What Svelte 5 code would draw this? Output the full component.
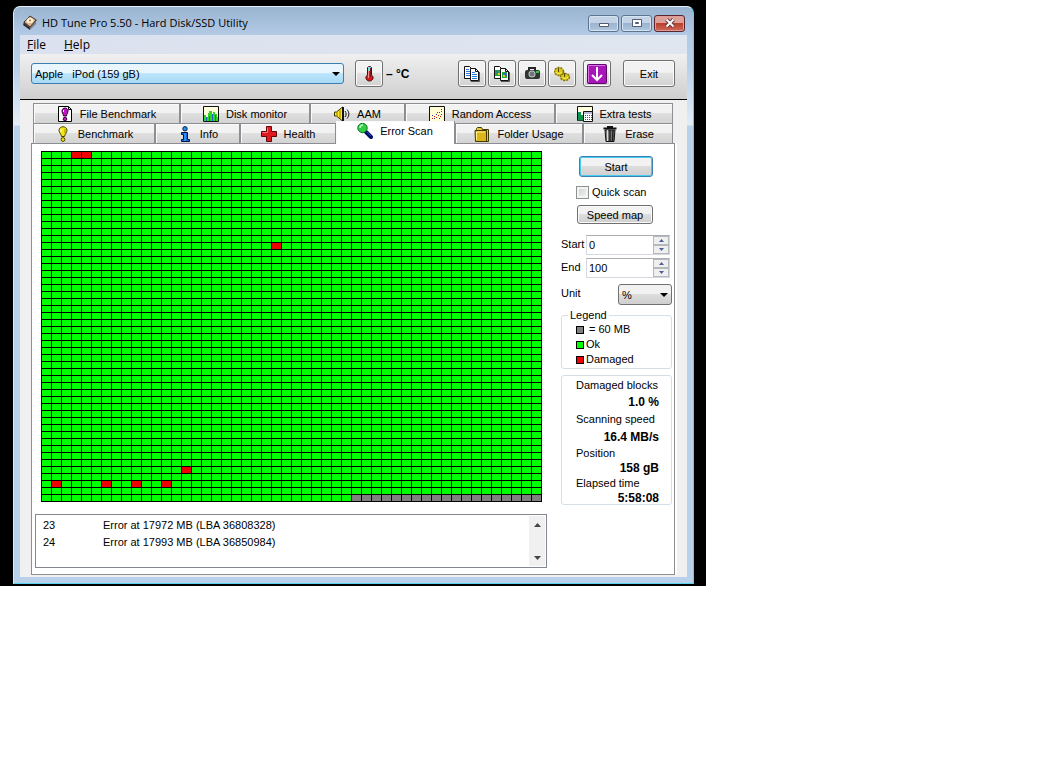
<!-- HD Tune Pro - Error Scan window -->
<script lang="ts">
    type Tab = {
        name: string;
        icon: string;
        active?: boolean;
    }

    const COLS = 50;
    const ROWS = 50;

    // Block indexes, counted row by row
    const damaged = new Set([3, 4, 673, 2264, 2351, 2356, 2359, 2362]);
    const scannedBlocks = 2481;

    const blocks = Array.from({length: COLS * ROWS}, (_, i) => {
        if (damaged.has(i)) return 'damaged';
        return i < scannedBlocks ? 'ok' : 'pending';
    });

    const backTabs: Tab[] = [
        {name: 'File Benchmark', icon: 'file'},
        {name: 'Disk monitor', icon: 'monitor'},
        {name: 'AAM', icon: 'speaker'},
        {name: 'Random Access', icon: 'random'},
        {name: 'Extra tests', icon: 'extra'},
    ];

    const frontTabs: Tab[] = [
        {name: 'Benchmark', icon: 'bulb'},
        {name: 'Info', icon: 'info'},
        {name: 'Health', icon: 'health'},
        {name: 'Error Scan', icon: 'scan', active: true},
        {name: 'Folder Usage', icon: 'folder'},
        {name: 'Erase', icon: 'trash'},
    ];

    const tools = [
        {icon: 'copyText', label: 'Copy text'},
        {icon: 'copyImage', label: 'Copy image'},
        {icon: 'camera', label: 'Save screenshot'},
        {icon: 'options', label: 'Options'},
        {icon: 'down', label: 'Minimize to tray'},
    ];

    const errors = [
        {id: 23, text: 'Error at 17972 MB (LBA 36808328)'},
        {id: 24, text: 'Error at 17993 MB (LBA 36850984)'},
    ];

    const stats = [
        {label: 'Damaged blocks', value: '1.0 %'},
        {label: 'Scanning speed', value: '16.4 MB/s'},
        {label: 'Position', value: '158 gB'},
        {label: 'Elapsed time', value: '5:58:08'},
    ];

    let quickScan = $state(false);
    let start = $state(0);
    let end = $state(100);
</script>

{#snippet icon(name: string)}
    <svg class="icon" width="16" height="16" viewBox="0 0 16 16" aria-hidden="true">
        {#if name === 'app'}
            <path d="M1 8 8 1l7 4-7 9z" fill="#6a4a38"/>
            <path d="M2 7 8 1l6 4-6 7z" fill="#d9b48c" stroke="#4b3a35"/>
            <ellipse cx="8" cy="5.5" rx="3.4" ry="2.6" fill="#fff0d4"/>
            <circle cx="8" cy="5.5" r="1" fill="#9d6c48"/>
            <path d="M2 8l6 5v2L1 10z" fill="#2c2c30"/>
            <path d="M8 13l6-7v3l-6 6z" fill="#81818b"/>
        {:else if name === 'file'}
            <path d="M1.500 .5h10l3 3v12h-13z" fill="#fff" stroke="#000"/>
            <path d="M11.500 .5v3h3" fill="none" stroke="#000"/>
            <path d="M5 5c0-4 6-4 6 0 0 2-1 2-1.500 5h-3C6 7 5 7 5 5z" fill="#c313c7" stroke="#300030"/>
            <circle cx="8" cy="13" r="1.800" fill="#c313c7" stroke="#300030"/>
            <path d="M6.500 4v2" stroke="#fff"/>
        {:else if name === 'monitor'}
            <path d="M.5 .5h15v15H.5z" fill="#ffffdb" stroke="#111"/>
            <path d="M1 15V9h2v2h2V7h1V5h3v3h1V6h2v2h2v3h1v4z" fill="#2cd428"/>
            <path d="M3 11h1v4H3zM6 10h1v5H6zM9 8h1v7H9zM12 9h1v6h-1z" fill="#2461cc"/>
        {:else if name === 'speaker'}
            <path d="M.5 6h2L8.500 1v14l-6-5h-2z" fill="#ffe61f" stroke="#3c3600"/>
            <path d="M6 3.500v9M3 6v4" stroke="#987c00"/>
            <path d="M9 1v14" stroke="#111" stroke-width="2"/>
            <path d="M11 5c1.500 2 1.500 4 0 6M13 3.500c2.500 3 2.500 6 0 9" fill="none" stroke="#111"/>
        {:else if name === 'random'}
            <path d="M.5 .5h15v15H.5z" fill="#fffbd3" stroke="#111"/>
            <path d="M3 12h1v1H3zM5 10h1v1H5zM7 11h1v1H7zM9 9h1v1H9zM11 10h1v1h-1zM8 6h1v1H8zM12 5h1v1h-1z" fill="#d21919"/>
            <path d="M3 9h1v1H3zM5 12h1v1H5zM7 8h1v1H7zM10 6h1v1h-1zM12 8h1v1h-1zM12 3h1v1h-1zM10 12h1v1h-1z" fill="#3139ad"/>
        {:else if name === 'extra'}
            <path d="M.5 .5h15v14H.5z" fill="#ffffe0" stroke="#111"/>
            <path d="M1 6h3v3h2v5.500H1z" fill="#0b9350"/>
            <path d="M6.500 5.500h9v10h-9z" fill="#fff" stroke="#111"/>
            <path d="M7 6h8v2H7z" fill="#b8b8dd"/>
            <path d="M8 9.500h7M8 11.500h7M8 13.500h7" stroke="#742bb8" stroke-dasharray="1 1"/>
        {:else if name === 'bulb'}
            <path d="M4 4.500c0-5 8-5 8 0 0 2-2 3-2.500 6h-3C6 7.500 4 6.500 4 4.500z" fill="#f2e813" stroke="#4a4300"/>
            <circle cx="8" cy="13.500" r="1.900" fill="#f2e813" stroke="#4a4300"/>
            <path d="M6 3v3" stroke="#fff"/>
            <path d="M10 3v4" stroke="#a69600"/>
        {:else if name === 'info'}
            <circle cx="8" cy="2.800" r="2.200" fill="#2c8df1" stroke="#00204b"/>
            <path d="M4.500 6.500h6v7h2v2h-8v-2h2v-5h-2z" fill="#1169de" stroke="#001538"/>
            <path d="M8 7v8" stroke="#2f8df0" stroke-width="2"/>
        {:else if name === 'health'}
            <path d="M5.500 .5h5v5h5v5h-5v5h-5v-5h-5v-5h5z" fill="#dd1b21" stroke="#610309"/>
            <path d="M6.500 6V1.500M1.500 6.500h5" stroke="#ff7575"/>
        {:else if name === 'scan'}
            <path d="m9 9 5 5" stroke="#000e66" stroke-width="4" stroke-linecap="round"/>
            <path d="m10 9 4 4" stroke="#224cd0" stroke-width="1"/>
            <circle cx="5.500" cy="5" r="4.700" fill="#31cf41" stroke="#13702b"/>
            <path d="M3 5c0-2 1-3 3-3" fill="none" stroke="#b3ffb5" stroke-width="1.500"/>
        {:else if name === 'folder'}
            <path d="M2.500 3.500v-1l1-1h4l1 2h6v12h-12z" fill="#edc72b" stroke="#443700"/>
            <path d="M1 4.500h11.500v11h-11z" fill="#dcb51b" stroke="#443700"/>
            <path d="M2.500 14V6H11" fill="none" stroke="#fff18b"/>
        {:else if name === 'trash'}
            <path d="M1.500 2.500h13M6 2V.5h4V2" fill="none" stroke="#111" stroke-width="2"/>
            <path d="M3 4h10l-1 11.500H4z" fill="#797979" stroke="#111"/>
            <path d="M5.500 4v11" stroke="#ddd"/>
            <path d="M8 4v11M11 4l-.5 11" stroke="#222" stroke-width="1.500"/>
        {:else if name === 'copyText' || name === 'copyImage'}
            <path d="M.5 .5h5l2 2v10h-7z" fill="#fff" stroke="#111"/>
            <path d="M6.500 2.500h5l3 3v9h-8z" fill="#fff" stroke="#111"/>
            <path d="M15.500 6v9.500H7" fill="none" stroke="#555"/>
            <path d="M11.500 2.500v3h3" fill="none" stroke="#111"/>
            {#if name === 'copyText'}
                <path d="M2 3.500h3M2 5.500h4M2 7.500h4M2 9.500h4M8 6.500h3M8 8.500h5M8 10.500h5M8 12.500h5" stroke="#2b78de"/>
            {:else}
                <path d="M1 4h5v6H1zM8 6h5v6H8z" fill="#22a63c"/>
                <path d="M2 5h2v2H2zM10 7h3v3h-3z" fill="#2a72bd"/>
                <path d="M4 7h2v2H4zM9 9h2v2H9z" fill="#e6c829"/>
            {/if}
        {:else if name === 'camera'}
            <path d="M5 4V2h6v2" fill="none" stroke="#262626" stroke-width="2"/>
            <rect x="1" y="4" width="15" height="9" rx="2" fill="#303432"/>
            <circle cx="8" cy="8" r="3.500" fill="#c3c9c9"/>
            <circle cx="8" cy="8" r="2.500" fill="#6d7778"/>
            <path d="M12 5h3v2h-3z" fill="#37c448"/>
        {:else if name === 'options'}
            <ellipse cx="5" cy="5.500" rx="4.500" ry="4" fill="#d8c71d" stroke="#857300" stroke-width="1.500" stroke-dasharray="2 1"/>
            <ellipse cx="11" cy="11" rx="4.500" ry="3.500" fill="#d8c71d" stroke="#857300" stroke-width="1.500" stroke-dasharray="2 1"/>
            <path d="M4.500 2v4M10.500 7v4" stroke="#5a4d00"/>
            <path d="M2 6c1 2 4 2 6 0M8 11c1 2 4 2 6 0" fill="none" stroke="#fff45d"/>
        {:else if name === 'thermo'}
            <path d="M6.500 2c0-2 4-2 4 0v7c3 2 1.500 6-2 6s-5-4-2-6z" fill="#d91717" stroke="#3b1010"/>
            <path d="M7 1h3v4H7z" fill="#7fdce6"/>
            <path d="M7.500 5v7" stroke="#ff8c8c"/>
            <path d="M9.500 2v9" stroke="#7a1b1b"/>
        {/if}
    </svg>
{/snippet}

{#snippet tabRow(tabs: Tab[], row: string)}
    <div class="tab-row {row}">
        {#each tabs as tab}
            <button class="tab" class:active={tab.active} role="tab" aria-selected={!!tab.active}>
                {@render icon(tab.icon)}
                <span>{tab.name}</span>
            </button>
        {/each}
    </div>
{/snippet}

{#snippet arrow()}
    <svg class="arrow" width="8" height="4" viewBox="0 0 8 4" aria-hidden="true"><path d="M0 0h8L4 4z" fill="#000"/></svg>
{/snippet}

{#snippet spinner(name: string, step: (by: number) => void)}
    <span class="spin">
        <button aria-label="Increase {name}" onclick={() => step(1)}>
            <svg width="5" height="3" viewBox="0 0 5 3"><path d="M0 3h5L2.500 0z" fill="#4c5f96"/></svg>
        </button>
        <button aria-label="Decrease {name}" onclick={() => step(-1)}>
            <svg width="5" height="3" viewBox="0 0 5 3"><path d="M0 0h5L2.500 3z" fill="#4c5f96"/></svg>
        </button>
    </span>
{/snippet}

<div class="desktop">
    <main class="window">
        <header class="titlebar">
            {@render icon('app')}
            <h1>HD Tune Pro 5.50 - Hard Disk/SSD Utility</h1>
            <div class="window-buttons">
                <button aria-label="Minimize">
                    <svg width="12" height="10" viewBox="0 0 12 10"><path d="M1.500 5.500h9v3h-9z" fill="#fff" stroke="#535d6d"/></svg>
                </button>
                <button aria-label="Maximize">
                    <svg width="12" height="10" viewBox="0 0 12 10"><path d="M1.500 1.500h9v7h-9z" fill="#fff" stroke="#535d6d"/><path d="M4.500 4.500h3v1h-3z" fill="#9bb1cc" stroke="#535d6d"/></svg>
                </button>
                <button class="close" aria-label="Close">
                    <svg width="12" height="10" viewBox="0 0 12 10"><path d="m2.500 1.500 7 7m0-7-7 7" stroke="#5b3a42" stroke-width="4"/><path d="m2.500 1.500 7 7m0-7-7 7" stroke="#fff" stroke-width="2"/></svg>
                </button>
            </div>
        </header>

        <div class="client">
            <nav class="menu">
                <a href="#file"><u>F</u>ile</a>
                <a href="#help"><u>H</u>elp</a>
            </nav>

            <div class="toolbar">
                <div class="drive">
                    <select aria-label="Drive">
                        <option>Apple&nbsp;&nbsp; iPod (159 gB)</option>
                    </select>
                    {@render arrow()}
                </div>
                <button class="tool" aria-label="Temperature">{@render icon('thermo')}</button>
                <span class="temperature">– °C</span>
                <div class="tools">
                    {#each tools as tool}
                        <button class="tool {tool.icon}" aria-label={tool.label}>
                            {#if tool.icon === 'down'}
                                <svg width="20" height="20" viewBox="0 0 20 20" aria-hidden="true">
                                    <rect x=".5" y=".5" width="19" height="19" rx="1" fill="#a815b8" stroke="#5c0568"/>
                                    <path d="M1.500 18V1.500H18" fill="none" stroke="#dd70e5"/>
                                    <path d="M10 3v13M5 11l5 5 5-5" fill="none" stroke="#fff" stroke-width="2"/>
                                </svg>
                            {:else}
                                {@render icon(tool.icon)}
                            {/if}
                        </button>
                    {/each}
                </div>
                <button class="tool exit">Exit</button>
            </div>

            <div class="tabs" role="tablist">
                {@render tabRow(backTabs, 'back')}
                {@render tabRow(frontTabs, 'front')}
            </div>

            <section class="panel">
                <div class="results">
                    <div class="map" role="img" aria-label="Block map">
                        {#each blocks as state}
                            <i class={state}></i>
                        {/each}
                    </div>

                    <div class="log">
                        <ul>
                            {#each errors as error}
                                <li><span>{error.id}</span><span>{error.text}</span></li>
                            {/each}
                        </ul>
                        <div class="scrollbar">
                            <button aria-label="Scroll up"><svg width="7" height="4" viewBox="0 0 7 4"><path d="M0 4h7L3.500 0z" fill="#444"/></svg></button>
                            <button aria-label="Scroll down"><svg width="7" height="4" viewBox="0 0 7 4"><path d="M0 0h7L3.500 4z" fill="#444"/></svg></button>
                        </div>
                    </div>
                </div>

                <aside class="controls">
                    <button class="push start">Start</button>
                    <label class="quick"><input type="checkbox" bind:checked={quickScan}>Quick scan</label>
                    <button class="push">Speed map</button>

                    <div class="field">
                        <label for="start">Start</label>
                        <div class="number">
                            <input id="start" type="text" bind:value={start}>
                            {@render spinner('start', (by) => start = Number(start) + by)}
                        </div>
                    </div>
                    <div class="field">
                        <label for="end">End</label>
                        <div class="number">
                            <input id="end" type="text" bind:value={end}>
                            {@render spinner('end', (by) => end = Number(end) + by)}
                        </div>
                    </div>
                    <div class="field unit">
                        <label for="unit">Unit</label>
                        <div class="unit-select">
                            <select id="unit"><option>%</option></select>
                            {@render arrow()}
                        </div>
                    </div>

                    <fieldset>
                        <legend>Legend</legend>
                        <p><i class="pending"></i><span class="size">= 60 MB</span></p>
                        <p><i class="ok"></i>Ok</p>
                        <p><i class="damaged"></i>Damaged</p>
                    </fieldset>

                    <dl>
                        {#each stats as stat}
                            <dt>{stat.label}</dt>
                            <dd>{stat.value}</dd>
                        {/each}
                    </dl>
                </aside>
            </section>
        </div>
    </main>
</div>

<style>
    :global(body) {
        background: #fff;
        color: #000;
        font: 11px/14px "Liberation Sans", Arial, sans-serif;
    }

    *, *::before, *::after {
        box-sizing: border-box;
    }

    button, input, select {
        font: inherit;
        color: inherit;
        margin: 0;
    }

    button {
        display: flex;
        align-items: center;
        justify-content: center;
        padding: 0;
    }

    svg {
        display: block;
        flex: none;
    }

    .desktop {
        margin-right: 331px;
        min-width: 640px;
        padding: 6px 12px 2px 13px;
        background: #000;
    }

    .window {
        padding: 0 6px 6px;
        border: 1px solid #56d3ee;
        border-top-color: #e4f1fb;
        border-left-color: #dcebf8;
        border-radius: 7px 7px 0 0;
        background: linear-gradient(#99b4d1 0, #b3cae5 28px, #b9d0e9 60px, #e2edf7 118px, #b9d1ea 119px);
    }

    .titlebar {
        display: flex;
        align-items: center;
        gap: 4px;
        height: 28px;
        padding: 4px 2px 0;
    }

    h1 {
        flex: 1;
        margin: 0;
        font: 11px/16px "Open Sans", "Segoe UI", sans-serif;
    }

    .window-buttons {
        display: flex;
        gap: 2px;
    }

    .window-buttons button {
        width: 31px;
        height: 17px;
        border: 1px solid #5d7491;
        border-radius: 3px;
        background: linear-gradient(#c4d4e6 0 45%, #9cb3cf 50%, #b2c8e0);
        box-shadow: inset 0 0 0 1px #d6e3f1;
    }

    .window-buttons .close {
        border-color: #5b2530;
        background: linear-gradient(#dea19a 0 45%, #b9402d 50%, #d0695a);
        box-shadow: inset 0 0 0 1px #dd9e98;
    }

    .client {
        padding-bottom: 2px;
        background: #f0f0f0;
    }

    .menu {
        display: flex;
        gap: 18px;
        height: 19px;
        padding: 0 7px;
        background: linear-gradient(90deg, #dbe1ee, #dfe6f0);
        font: 12px/20px "Open Sans", "Segoe UI", sans-serif;
    }

    .menu a {
        color: inherit;
        text-decoration: none;
    }

    .toolbar {
        display: flex;
        align-items: center;
        height: 46px;
        padding: 0 12px 6px 11px;
        border-bottom: 1px solid #000;
        background: linear-gradient(#f0f0f0, #cfcfcf);
    }

    .drive {
        position: relative;
        flex: 1;
    }

    select {
        display: block;
        width: 100%;
        height: 21px;
        padding: 0 3px;
        appearance: none;
        border: 1px solid #707070;
        border-radius: 3px;
        background: linear-gradient(#f2f2f2 0 45%, #dddddd 50%, #cfcfcf);
    }

    .drive select {
        border-color: #3c7fb1;
        background: linear-gradient(#eaf6fd 0 45%, #bee6fd 50%, #a7d9f5);
    }

    .arrow {
        position: absolute;
        top: 9px;
        right: 4px;
        pointer-events: none;
    }

    .tool {
        width: 28px;
        height: 27px;
        border: 1px solid #707070;
        border-radius: 3px;
        background: linear-gradient(#f2f2f2 0 45%, #e2e2e2 50%, #d2d2d2);
        box-shadow: inset 0 0 0 1px #fafafa;
    }

    .drive + .tool {
        margin-left: 11px;
    }

    .temperature {
        width: 75px;
        padding-left: 3px;
        font-size: 12px;
        font-weight: bold;
    }

    .tools {
        display: flex;
        gap: 2px;
    }

    .tool.down {
        margin-left: 5px;
    }

    .exit {
        width: 52px;
        margin-left: 12px;
    }

    .tabs {
        padding: 3px 14px 0 13px;
    }

    .tab-row {
        display: grid;
        grid-template-rows: 20px;
        align-items: end;
    }

    .back {
        grid-template-columns: 147fr 130fr 95fr 150fr 118fr;
    }

    .front {
        grid-template-columns: 122fr 85fr 96fr 119fr 128fr 90fr;
    }

    .tab {
        gap: 7px;
        height: 20px;
        border: solid #8c8e94;
        border-width: 1px 1px 0 1px;
        background: linear-gradient(#f2f2f2 0 45%, #dfdfdf 50%, #d3d3d3);
        box-shadow: inset 1px 1px 0 #fafafa;
        white-space: nowrap;
    }

    .tab.active {
        position: relative;
        height: 23px;
        padding-bottom: 4px;
        margin-bottom: -1px;
        border-width: 0 1px 0 0;
        background: #fff;
    }

    .panel {
        display: flex;
        gap: 14px;
        margin: 0 12px 0 11px;
        padding: 7px 2px 6px 3px;
        border: 1px solid #8c8e94;
        background: #fff;
        box-shadow: 2px 0 0 #fff;
    }

    .results {
        flex: 1;
        min-width: 0;
    }

    .map {
        display: grid;
        grid-template-columns: repeat(50, 1fr);
        grid-auto-rows: 6px;
        gap: 1px;
        margin: 0 5px 12px 6px;
        padding: 1px;
        background: #000;
    }

    .ok {
        background: #00ff00;
    }

    .damaged {
        background: #f00000;
    }

    .pending {
        background: #808080;
    }

    .log {
        display: flex;
        height: 54px;
        border: 1px solid #828790;
    }

    ul {
        flex: 1;
        margin: 0;
        padding: 2px 7px;
        list-style: none;
        line-height: 17px;
    }

    li {
        display: grid;
        grid-template-columns: 60px 1fr;
    }

    .scrollbar {
        display: flex;
        flex-direction: column;
        justify-content: space-between;
        width: 16px;
        margin: 1px;
        background: #f0f0f0;
    }

    .scrollbar button {
        height: 17px;
        border: 0;
        background: none;
    }

    .controls {
        width: 111px;
        padding-top: 5px;
    }

    .push {
        width: 76px;
        height: 19px;
        margin-left: 16px;
        border: 1px solid #707070;
        border-radius: 3px;
        background: linear-gradient(#f2f2f2 0 45%, #dddddd 50%, #cfcfcf);
        box-shadow: inset 0 0 0 1px #fafafa;
    }

    .push.start {
        width: 74px;
        height: 21px;
        margin-left: 18px;
        border-color: #3c7fb1;
        box-shadow: inset 0 0 0 1px #48cdf0;
    }

    .quick {
        display: flex;
        align-items: center;
        gap: 3px;
        height: 14px;
        margin: 8px 0 6px 15px;
    }

    .quick input {
        width: 13px;
        height: 13px;
        appearance: none;
        border: 1px solid #8e8f8f;
        background: linear-gradient(135deg, #cbcfd5, #f6f6f6);
        box-shadow: inset 0 0 0 2px #f4f4f4;
    }

    .quick input:checked {
        background: #4c5f96;
    }

    .field {
        display: flex;
        justify-content: space-between;
        margin-bottom: 3px;
        padding-right: 2px;
    }

    .push + .field {
        margin-top: 11px;
    }

    .field label {
        line-height: 19px;
    }

    .number {
        display: flex;
        width: 84px;
        height: 20px;
        border: 1px solid #d5d8df;
        border-top-color: #abadb3;
    }

    .number input {
        flex: 1;
        min-width: 0;
        padding: 0 2px;
        border: 0;
        outline: 0;
        background: none;
    }

    .spin {
        display: flex;
        flex-direction: column;
        width: 16px;
    }

    .spin button {
        flex: 1;
        border: 1px solid #b5b8bd;
        background: #efefef;
    }

    .unit {
        margin: 6px 0 3px;
        padding: 0;
    }

    .unit-select {
        position: relative;
        width: 54px;
    }

    fieldset {
        min-width: 0;
        height: 61px;
        margin: 0 0 6px;
        padding: 0 0 0 14px;
        border: 1px solid #d5dfe5;
        border-radius: 3px;
    }

    legend {
        margin-left: -8px;
        padding: 0 2px;
    }

    p {
        display: flex;
        align-items: center;
        gap: 2px;
        margin: 0;
        line-height: 15px;
    }

    p i {
        width: 8px;
        height: 8px;
        border: 1px solid #000;
    }

    .size {
        padding-left: 3px;
    }

    dl {
        display: grid;
        grid-template-rows: 17px 17px 18px 17px 15px 15px 16px 13px;
        align-items: center;
        margin: 0;
        padding: 0 12px 0 14px;
        border: 1px solid #d5dfe5;
        border-radius: 3px;
    }

    dd {
        margin: 0;
        font-size: 12px;
        font-weight: bold;
        text-align: right;
    }
</style>
